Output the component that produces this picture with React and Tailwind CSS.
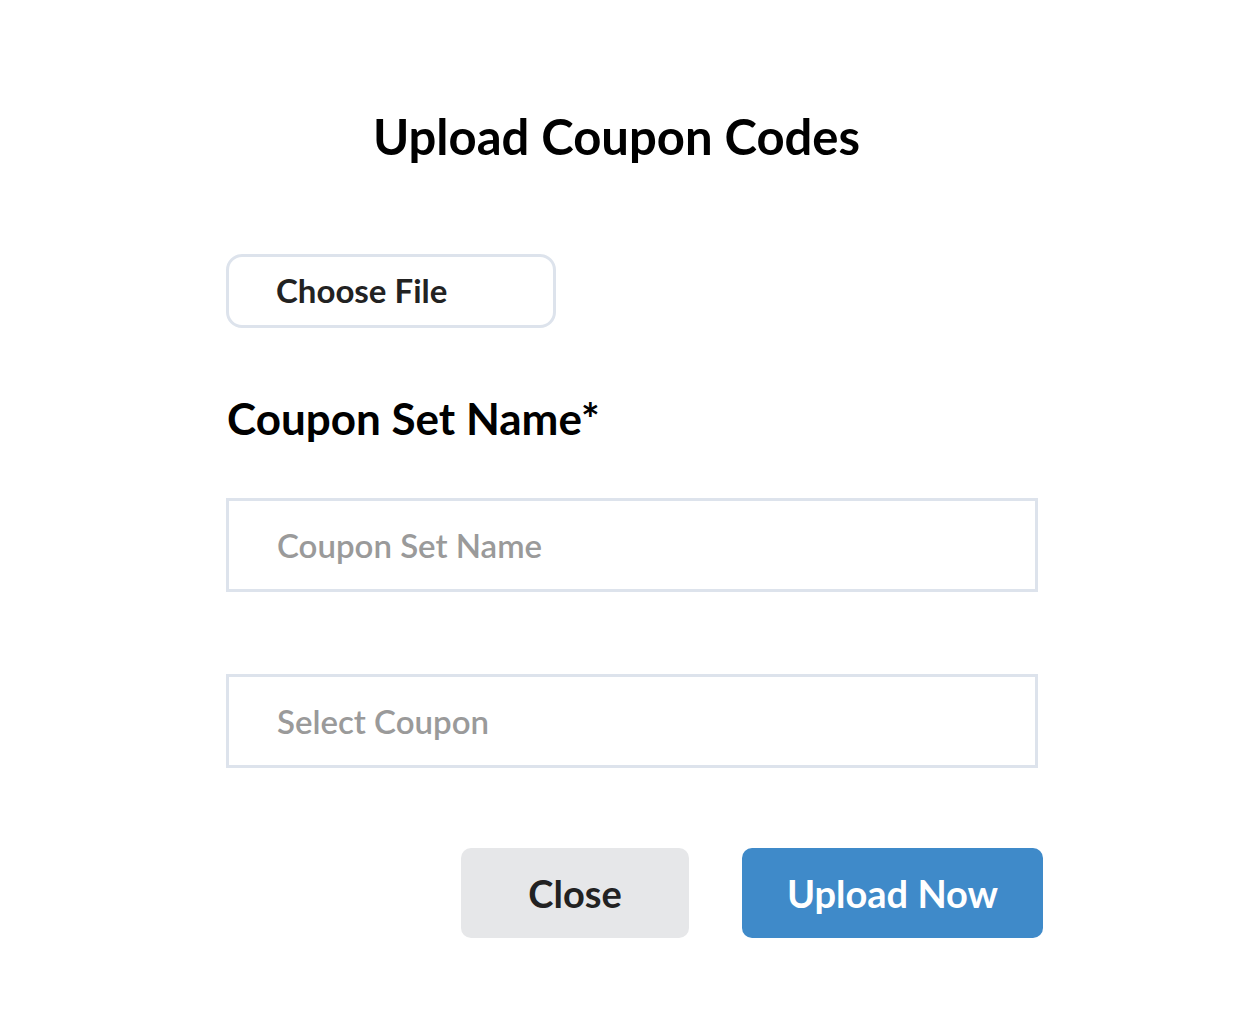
import React from 'react';

const App = () => {
  return (
    <div className="w-[1236px] h-[1016px] bg-white font-['Lato',sans-serif] relative">
      <div className="flex flex-col pt-[104px]">
        <h1 className="text-[49px] leading-[64px] font-bold text-black text-center pr-[3px]">
          Upload Coupon Codes
        </h1>

        <div className="flex flex-col pl-[226px] pr-[198px]">
          <div className="mt-[86px]">
            <button className="w-[330px] h-[74px] border-[3px] border-[#dde3ec] rounded-[16px] text-left pl-[47px] text-[33px] font-bold text-[#222]">
              Choose File
            </button>
          </div>

          <label className="mt-[62px] text-[44px] leading-[56px] font-bold text-black pl-[1px]">
            Coupon Set Name*
          </label>

          <input
            className="mt-[52px] w-[812px] h-[94px] border-[3px] border-[#dde3ec] pl-[48px] text-[33px] font-semibold text-[#222] placeholder:text-[#9a9a9a] outline-none"
            placeholder="Coupon Set Name"
          />

          <input
            className="mt-[82px] w-[812px] h-[94px] border-[3px] border-[#dde3ec] pl-[48px] text-[33px] font-semibold text-[#222] placeholder:text-[#9a9a9a] outline-none"
            placeholder="Select Coupon"
          />

          <div className="mt-[80px] flex justify-end gap-[53px] w-[817px]">
            <button className="w-[228px] h-[90px] rounded-[10px] bg-[#e6e7e9] text-[38px] font-bold text-[#222]">
              Close
            </button>
            <button className="w-[301px] h-[90px] rounded-[10px] bg-[#3f8ac9] text-[38px] font-bold text-white">
              Upload Now
            </button>
          </div>
        </div>
      </div>
    </div>
  );
};

export default App;
